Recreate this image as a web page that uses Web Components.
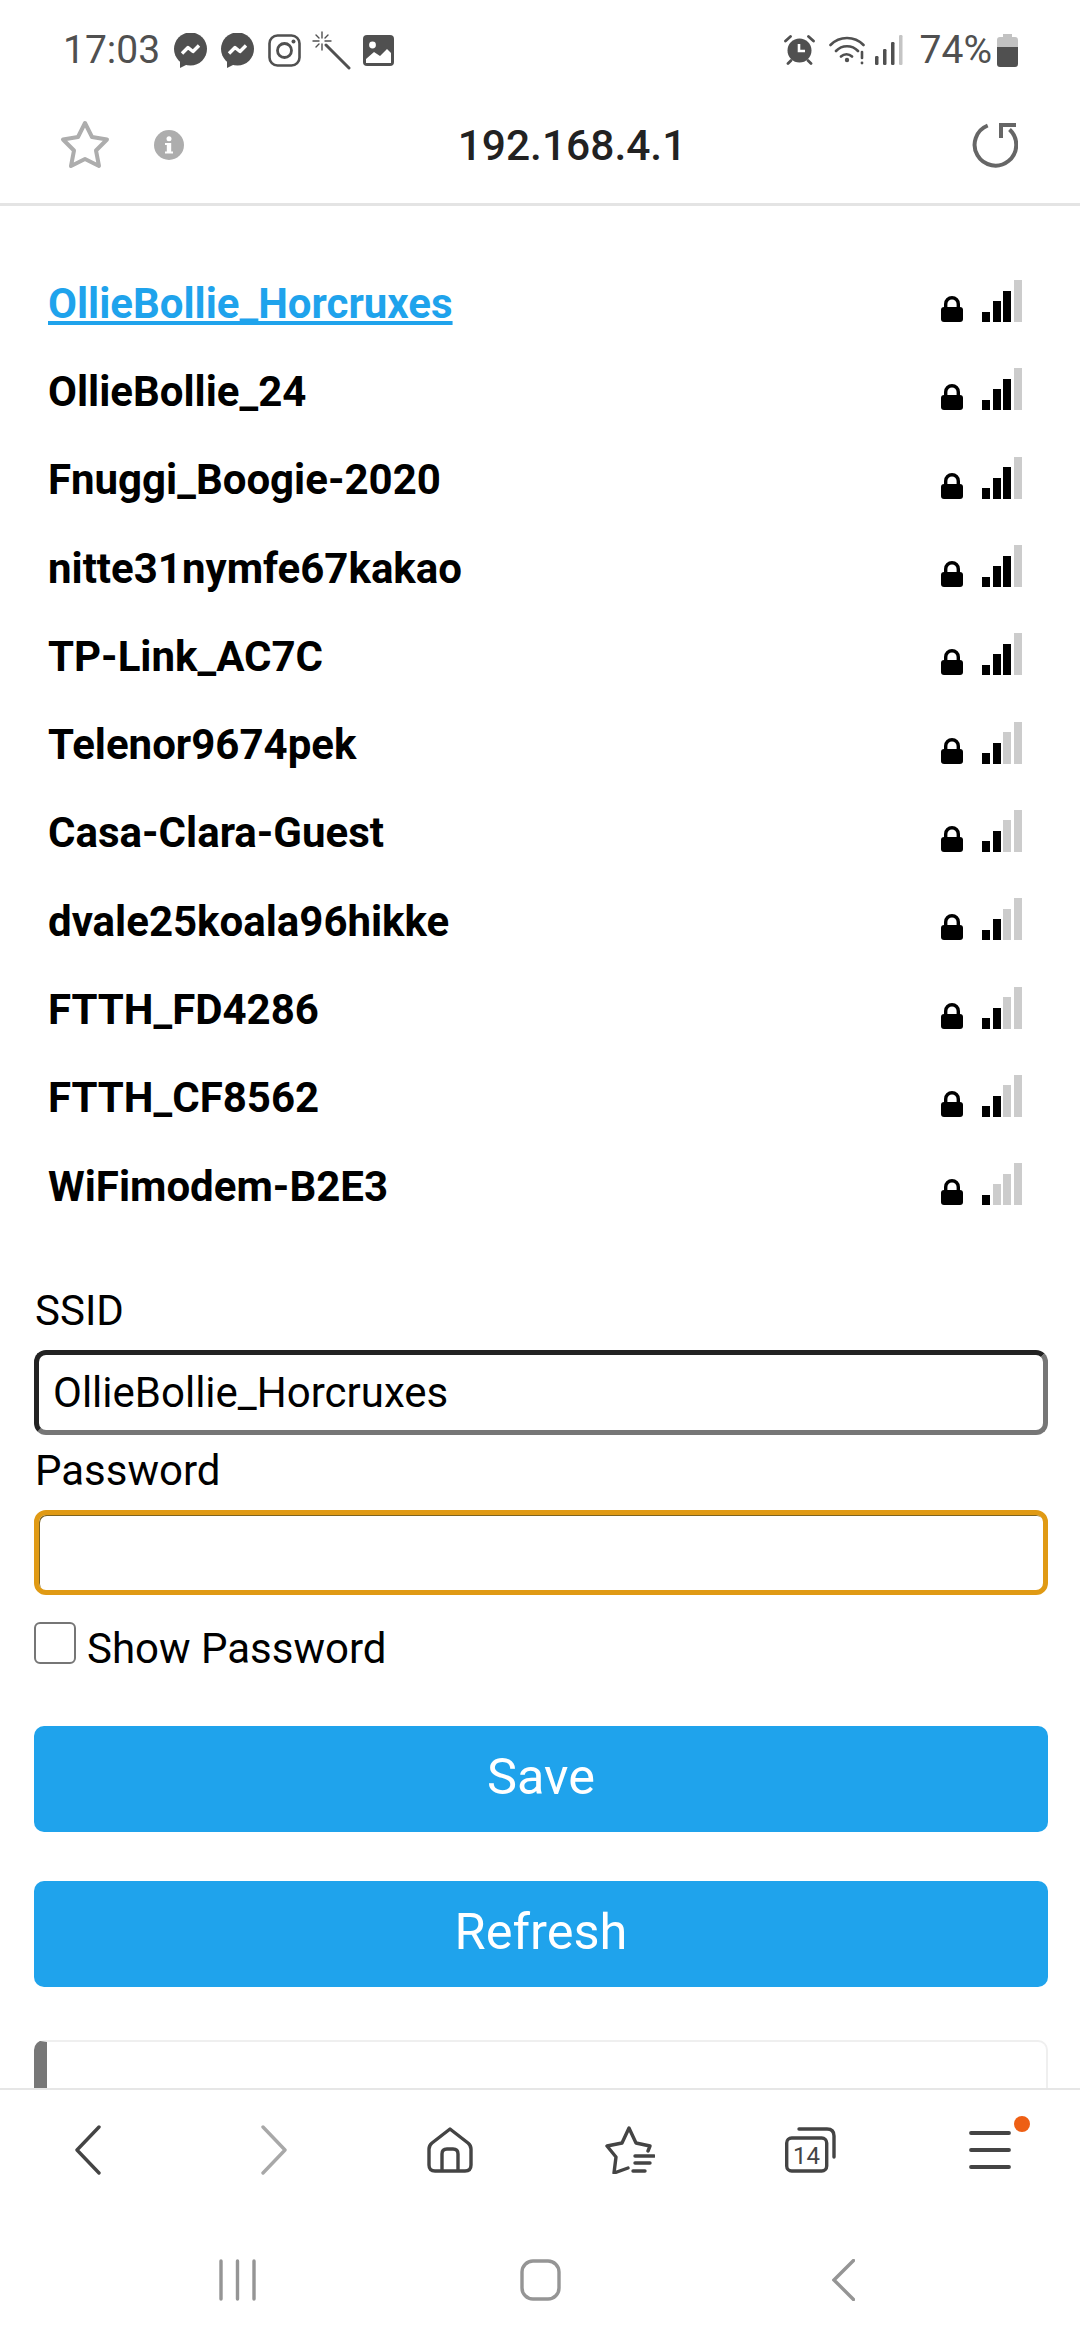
<!DOCTYPE html>
<html>
<head>
<meta charset="utf-8">
<title>192.168.4.1</title>
<style>
    html,body{
        margin: 0;
        background: #fff;
        font-family: Roboto, 'Liberation Sans', sans-serif;
    }
    body{
        width: 1080px;
        height: 2340px;
        display: flex;
        flex-direction: column;
        overflow: hidden;
    }
</style>
</head>
<body>
    <status-bar></status-bar>
    <address-bar url="192.168.4.1"></address-bar>
    <wifi-page>
        <wifi-row level="3" active>OllieBollie_Horcruxes</wifi-row>
        <wifi-row level="3">OllieBollie_24</wifi-row>
        <wifi-row level="3">Fnuggi_Boogie-2020</wifi-row>
        <wifi-row level="3">nitte31nymfe67kakao</wifi-row>
        <wifi-row level="3">TP-Link_AC7C</wifi-row>
        <wifi-row level="2">Telenor9674pek</wifi-row>
        <wifi-row level="2">Casa-Clara-Guest</wifi-row>
        <wifi-row level="2">dvale25koala96hikke</wifi-row>
        <wifi-row level="2">FTTH_FD4286</wifi-row>
        <wifi-row level="2">FTTH_CF8562</wifi-row>
        <wifi-row level="1">WiFimodem-B2E3</wifi-row>
        <wifi-form slot="form"></wifi-form>
    </wifi-page>
    <tool-bar></tool-bar>
    <nav-keys></nav-keys>

<script>
// all icons live here, viewBox is the pixel size of the icon
const ICONS = {
    messenger: `<svg width="33" height="35" viewBox="0 0 33 35"><circle cx="16.5" cy="16" r="16.5" fill="#505050"/><path d="M6 26v9l8-4z" fill="#505050"/><path d="M8 20.5l6-6 5 4 6-6" fill="none" stroke="#fff" stroke-width="3.4" stroke-linejoin="round"/></svg>`,
    instagram: `<svg width="33" height="33" viewBox="0 0 33 33" fill="none" stroke="#505050"><rect x="1.5" y="1.5" width="30" height="30" rx="8" stroke-width="2.6"/><circle cx="16.5" cy="16.5" r="7" stroke-width="2.8"/><circle cx="25.5" cy="7.5" r="2" fill="#505050" stroke="none"/></svg>`,
    wand: `<svg width="40" height="39" viewBox="0 0 40 39" fill="none" stroke="#505050" stroke-linecap="round"><path d="M14 14l23 23" stroke-width="3"/><path d="M10 1v6M10 13v6M1 10h6M13 10h6M4 4l3 3M16 4l-3 3M4 16l3-3" stroke-width="1.4"/></svg>`,
    image: `<svg width="31" height="31" viewBox="0 0 31 31"><rect width="31" height="31" rx="4" fill="#505050"/><circle cx="9.5" cy="10" r="3.4" fill="#fff"/><path d="M3 28v-4l8-7 6 4 7-7 4 4v10z" fill="#fff"/></svg>`,
    alarm: `<svg width="31" height="30" viewBox="0 0 31 30"><circle cx="15.500" cy="15.500" r="12" fill="#505050"/><path d="M15 9v7h6" fill="none" stroke="#fff" stroke-width="2.6"/><path d="M1.500 6l5-4.500M29.500 6l-5-4.500M4 28.500l3-3M27 28.500l-3-3" stroke="#505050" stroke-width="2.800" stroke-linecap="round"/></svg>`,
    wifi: `<svg width="36" height="30" viewBox="0 0 36 30" fill="none" stroke="#505050" stroke-width="2.6" stroke-linecap="round"><path d="M1.500 10a23 23 0 0 1 33 0M7 16a15 15 0 0 1 22 0M12 21.500a8 8 0 0 1 11 0"/><circle cx="18" cy="25" r="2.200" fill="#505050" stroke="none"/><path d="M33 17v6" /><circle cx="33" cy="28" r="1.400" fill="#505050" stroke="none"/></svg>`,
    cell: `<svg width="28" height="30" viewBox="0 0 28 30"><rect x="0" y="21" width="3.500" height="9" rx="1.200" fill="#505050"/><rect x="8" y="14" width="3.500" height="16" rx="1.200" fill="#505050"/><rect x="16" y="7" width="3.500" height="23" rx="1.200" fill="#505050"/><rect x="24" y="0" width="3.500" height="30" rx="1.200" fill="#c4c4c4"/></svg>`,
    battery: `<svg width="21" height="33" viewBox="0 0 21 33"><path d="M6 0h9v3h3q3 0 3 3v7H0V6q0-3 3-3h3z" fill="#c2c2c2"/><path d="M0 13h21v17q0 3-3 3H3q-3 0-3-3z" fill="#505050"/></svg>`,
    star: `<svg width="50" height="50" viewBox="0 0 50 50"><path d="M25 3l7 14 15 2.500-11 11 3 15.500-14-7-14 7 3-15.500-11-11L18 17z" fill="none" stroke="#adadad" stroke-width="4" stroke-linejoin="round"/></svg>`,
    info: `<svg width="30" height="30" viewBox="0 0 30 30"><circle cx="15" cy="15" r="15" fill="#adadad"/><rect x="12.800" y="13" width="4.400" height="10" fill="#fff"/><circle cx="15" cy="8.700" r="2.500" fill="#fff"/><rect x="11" y="13" width="3" height="2" fill="#fff"/><rect x="11" y="21.500" width="8" height="2" fill="#fff"/></svg>`,
    reload: `<svg width="46" height="46" viewBox="0 0 46 46" fill="none" stroke="#666" stroke-width="4"><path d="M15.700 3.500A20.800 20.800 0 1 0 37.500 7.500"/><path d="M29 16V3h15"/></svg>`,
    lock: `<svg width="22" height="27" viewBox="0 0 22 27"><path d="M4.700 14V9a6.300 6.300 0 0 1 12.600 0v5" fill="none" stroke="#000" stroke-width="3.400"/><rect y="12" width="22" height="15" rx="3" fill="#000"/></svg>`,
    back: `<svg width="26" height="50" viewBox="0 0 26 50"><path d="M24 2L2 25l22 23" fill="none" stroke="#444" stroke-width="3.400" stroke-linecap="round" stroke-linejoin="round"/></svg>`,
    forward: `<svg width="26" height="50" viewBox="0 0 26 50"><path d="M2 2l22 23L2 48" fill="none" stroke="#a8a8a8" stroke-width="3.400" stroke-linecap="round" stroke-linejoin="round"/></svg>`,
    home: `<svg width="46" height="46" viewBox="0 0 46 46" fill="none" stroke="#444" stroke-width="3.400" stroke-linejoin="round"><path d="M23 2L41 16q3 2.500 3 6v16q0 6-6 6H8q-6 0-6-6V22q0-3.500 3-6z"/><path d="M15 44V27q0-5 5-5h6q5 0 5 5v17"/></svg>`,
    bookmarks: `<svg width="50" height="48" viewBox="0 0 50 48" fill="none" stroke="#444" stroke-width="3.400" stroke-linecap="round" stroke-linejoin="round"><path d="M23 42L9 47l2-16L2 20l15-3L24 2l7 15 14 3-2 5"/><path d="M30 30h19M30 37h15M28 45h12"/></svg>`,
    tabs: `<svg width="51" height="46" viewBox="0 0 51 46" fill="none" stroke="#444" stroke-width="3.400" stroke-linecap="round"><rect x="1.700" y="11" width="40" height="33" rx="5"/><path d="M14 2h28q7 0 7 7v21"/><text x="21.500" y="36.500" text-anchor="middle" font-family="Roboto, sans-serif" font-size="24" fill="#444" stroke="none">14</text></svg>`,
    menu: `<svg width="42" height="38" viewBox="0 0 42 38" stroke="#444" stroke-width="3.800" stroke-linecap="round"><path d="M2 2h38M2 19h38M2 36h38"/></svg>`,
    keyRecents: `<svg width="37" height="42" viewBox="0 0 37 42" stroke="#959595" stroke-width="3.400" stroke-linecap="round"><path d="M2 2v38M18.500 2v38M35 2v38"/></svg>`,
    keyHome: `<svg width="41" height="42" viewBox="0 0 41 42"><rect x="2" y="2" width="37" height="38" rx="11" fill="none" stroke="#959595" stroke-width="3.400"/></svg>`,
    keyBack: `<svg width="23" height="42" viewBox="0 0 23 42"><path d="M21.500 1.500L2 21l19.500 19.500" fill="none" stroke="#959595" stroke-width="3.400" stroke-linecap="round"/></svg>`
};

class StatusBar extends HTMLElement{
    constructor(){
        super()
        this.attachShadow({mode:'open'});
        this.shadowRoot.innerHTML = `
            <style>
                :host{
                    display: flex;
                    align-items: center;
                    box-sizing: border-box;
                    height: 100px;
                    padding: 0 62px 0 63px;
                    color: #505050;
                    font: 400 39px Roboto, sans-serif;
                }
                svg{ display: block; }
                .time{ margin-right: 14px; }
                .left,.right{ display: flex; align-items: center; }
                .left{ gap: 14px; }
                .wand{ margin: 0 -3px; }
                .right{ margin-left: auto; }
                .pct{ margin: 0 5px 0 17px; }
            </style>
            <span class="time">17:03</span>
            <div class="left">${ICONS.messenger}${ICONS.messenger}${ICONS.instagram}<div class="wand">${ICONS.wand}</div>${ICONS.image}</div>
            <div class="right">${ICONS.alarm}<span style="width:14px"></span>${ICONS.wifi}<span style="width:10px"></span>${ICONS.cell}<span class="pct">74%</span>${ICONS.battery}</div>
        `;
    }
}

class AddressBar extends HTMLElement{
    constructor(){
        super()
        this.attachShadow({mode:'open'});
        this.shadowRoot.innerHTML = `
            <style>
                :host{
                    display: flex;
                    align-items: center;
                    height: 90px;
                    padding: 0 62px 13px 60px;
                    border-bottom: 3px solid #e4e4e4;
                    color: #222;
                }
                svg{ display: block; }
                .info{ margin-left: 44px; }
                .url{
                    flex: 1;
                    text-align: center;
                    padding-right: 12px;
                    font: 500 42.5px Roboto, sans-serif;
                }
            </style>
            ${ICONS.star}<div class="info">${ICONS.info}</div>
            <div class="url">${this.getAttribute('url')}</div>
            ${ICONS.reload}
        `;
    }
}

class WifiPage extends HTMLElement{
    constructor(){
        super()
        this.attachShadow({mode:'open'});
        this.shadowRoot.innerHTML = `
            <style>
                :host{
                    display: block;
                    height: 1882px;
                    overflow: hidden;
                    flex: none;
                }
                .list{ padding: 53px 58px 0 48px; }
                .form{ padding: 0 32px 0 34px; }
            </style>
            <div class="list"><slot></slot></div>
            <div class="form"><slot name="form"></slot></div>
        `;
    }
}

class WifiRow extends HTMLElement{
    constructor(){
        super()
        this.attachShadow({mode:'open'});
        const level = Number(this.getAttribute('level'));
        let bars = '';
        for(let i=1;i<=4;i++){
            bars += `<i style="height:${i*10.5}px;background:${i<=level?'#000':'#ccc'}"></i>`;
        }
        this.shadowRoot.innerHTML = `
            <style>
                :host{
                    display: flex;
                    align-items: center;
                    justify-content: space-between;
                    height: 88.3px;
                }
                a{
                    font: 700 42px Roboto, sans-serif;
                    color: #000;
                    text-decoration: none;
                }
                :host([active]) a{
                    color: #1fa3ec;
                    text-decoration: underline;
                }
                .icons{
                    display: flex;
                    align-items: flex-end;
                    height: 42px;
                    margin-top: -4px;
                }
                .icons svg{ display: block; }
                .bars{
                    display: flex;
                    align-items: flex-end;
                    gap: 2.4px;
                    margin-left: 19px;
                }
                i{ display: block; width: 8.2px; }
            </style>
            <a><slot></slot></a>
            <div class="icons">${ICONS.lock}<div class="bars">${bars}</div></div>
        `;
    }
}

class WifiInput extends HTMLElement{
    constructor(){
        super()
        this.attachShadow({mode:'open'});
        this.shadowRoot.innerHTML = `
            <style>
                :host{
                    display: flex;
                    align-items: center;
                    box-sizing: border-box;
                    height: 85px;
                    padding: 0 14px;
                    border: 5px solid;
                    border-color: #222 #767676 #767676 #222;
                    border-radius: 12px;
                    font: 400 42px Roboto, sans-serif;
                    color: #000;
                }
                :host([focused]){
                    border-color: #e09a14;
                    box-shadow: inset 1px 1px 0 #7d6420;
                }
            </style>
            <slot></slot>
        `;
    }
}

class WifiButton extends HTMLElement{
    constructor(){
        super()
        this.attachShadow({mode:'open'});
        this.shadowRoot.innerHTML = `
            <style>
                :host{
                    display: flex;
                    align-items: center;
                    justify-content: center;
                    box-sizing: border-box;
                    height: 106px;
                    padding-bottom: 5px;
                    background: #1fa3ec;
                    color: #fff;
                    border-radius: 10px;
                    font: 400 50.5px Roboto, sans-serif;
                }
            </style>
            <slot></slot>
        `;
    }
}

class WifiForm extends HTMLElement{
    constructor(){
        super()
        this.attachShadow({mode:'open'});
        this.shadowRoot.innerHTML = `
            <style>
                :host{
                    display: block;
                    padding-top: 58px;
                    font: 400 42px Roboto, sans-serif;
                    color: #000;
                }
                label{
                    display: block;
                    line-height: 46px;
                    margin-bottom: 16px;
                    margin-left: 1px;
                }
                wifi-input + label{ margin-top: 13px; }
                .show{
                    display: flex;
                    align-items: center;
                    height: 42px;
                    margin: 27px 0 62px;
                }
                .box{
                    box-sizing: border-box;
                    width: 42px;
                    height: 42px;
                    margin-right: 11px;
                    border: 2.5px solid #767676;
                    border-radius: 6px;
                }
                .show span{ position: relative; top: 5px; }
                wifi-button + wifi-button{ margin-top: 49px; }
                .card{
                    margin-top: 53px;
                    height: 80px;
                    box-sizing: border-box;
                    border: 2px solid #efefef;
                    border-left: 13px solid #777;
                    border-radius: 10px;
                }
            </style>
            <label>SSID</label>
            <wifi-input>OllieBollie_Horcruxes</wifi-input>
            <label>Password</label>
            <wifi-input focused></wifi-input>
            <div class="show"><div class="box"></div><span>Show Password</span></div>
            <wifi-button>Save</wifi-button>
            <wifi-button>Refresh</wifi-button>
            <div class="card"></div>
        `;
    }
}

class ToolBar extends HTMLElement{
    constructor(){
        super()
        this.attachShadow({mode:'open'});
        this.shadowRoot.innerHTML = `
            <style>
                :host{
                    display: grid;
                    grid-template-columns: repeat(6,180px);
                    align-items: center;
                    justify-items: center;
                    box-sizing: border-box;
                    height: 132px;
                    padding-bottom: 10px;
                    border-top: 2px solid #e6e6e6;
                    background: #fff;
                    flex: none;
                }
                svg{ display: block; }
                .menu{ position: relative; }
                .dot{
                    position: absolute;
                    right: -19px;
                    top: -15px;
                    width: 16px;
                    height: 16px;
                    border-radius: 50%;
                    background: #ee5f14;
                }
            </style>
            <div style="margin-right:5px">${ICONS.back}</div>
            <div style="margin-left:7px">${ICONS.forward}</div>
            ${ICONS.home}
            ${ICONS.bookmarks}
            ${ICONS.tabs}
            <div class="menu">${ICONS.menu}<div class="dot"></div></div>
        `;
    }
}

class NavKeys extends HTMLElement{
    constructor(){
        super()
        this.attachShadow({mode:'open'});
        this.shadowRoot.innerHTML = `
            <style>
                :host{
                    display: grid;
                    grid-template-columns: repeat(3,303px);
                    justify-content: center;
                    align-items: center;
                    justify-items: center;
                    height: 120px;
                    flex: none;
                }
                svg{ display: block; }
            </style>
            ${ICONS.keyRecents}${ICONS.keyHome}${ICONS.keyBack}
        `;
    }
}

window.customElements.define('status-bar',StatusBar)
window.customElements.define('address-bar',AddressBar)
window.customElements.define('wifi-page',WifiPage)
window.customElements.define('wifi-row',WifiRow)
window.customElements.define('wifi-input',WifiInput)
window.customElements.define('wifi-button',WifiButton)
window.customElements.define('wifi-form',WifiForm)
window.customElements.define('tool-bar',ToolBar)
window.customElements.define('nav-keys',NavKeys)
</script>
</body>
</html>
